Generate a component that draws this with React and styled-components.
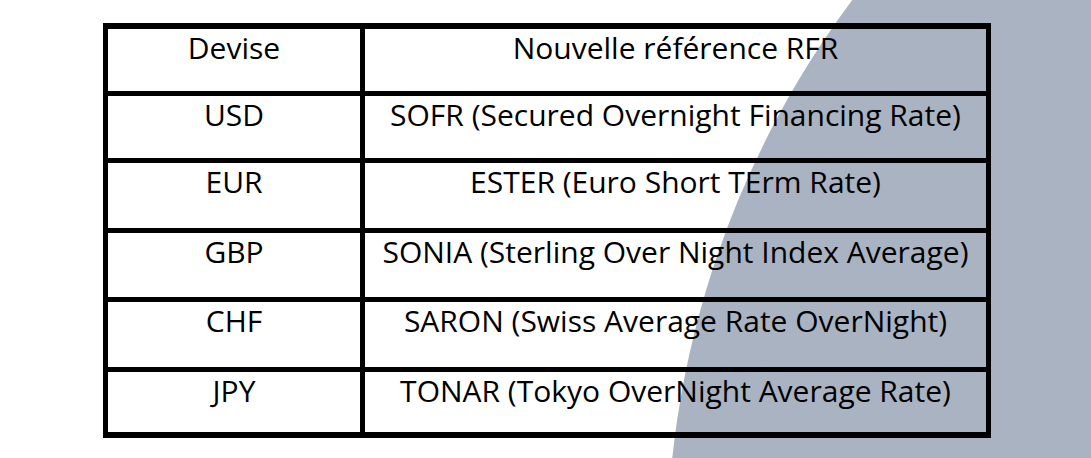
import styled, { createGlobalStyle } from 'styled-components';

const GlobalStyle = createGlobalStyle`
    html, body {
        margin: 0;
        padding: 0;
        background: #ffffff;
    }
`;

const rows = [
    { code: 'Devise', name: 'Nouvelle référence RFR', height: 67 },
    { code: 'USD', name: 'SOFR (Secured Overnight Financing Rate)', height: 67 },
    { code: 'EUR', name: 'ESTER (Euro Short TErm Rate)', height: 70 },
    { code: 'GBP', name: 'SONIA (Sterling Over Night Index Average)', height: 69 },
    { code: 'CHF', name: 'SARON (Swiss Average Rate OverNight)', height: 70 },
    { code: 'JPY', name: 'TONAR (Tokyo OverNight Average Rate)', height: 60 },
];

const Page = styled.div`
    position: relative;
    width: 1091px;
    height: 458px;
    overflow: hidden;
    padding: 23px 0 0 103px;
    box-sizing: border-box;
    font-family: "Open Sans", Lato, sans-serif;
    color: #000;
`;

// big slate disc peeking in from the right, behind the table
const Disc = styled.div`
    position: absolute;
    left: 667px;
    top: -373px;
    width: 1860px;
    height: 1860px;
    border-radius: 50%;
    background: #a9b3c2;
`;

const Table = styled.div`
    position: relative;
    display: grid;
    grid-template-columns: 257px 621px;
    grid-template-rows: ${p => p.heights.map(h => `${h}px`).join(' ')};
    width: max-content;
    border-style: solid;
    border-color: #000;
    border-width: 6px 5px 6px 5px;
`;

const Cell = styled.div`
    box-sizing: border-box;
    padding-top: 2px;
    text-align: center;
    font-size: 30px;
    line-height: 34px;
    white-space: nowrap;
    border-bottom: ${p => p.last ? 'none' : '5px solid #000'};
    border-right: ${p => p.first ? '5px solid #000' : 'none'};
`;

export default function App() {
    return (
        <>
            <GlobalStyle />
            <Page>
                <Disc />
                <Table heights={rows.map(r => r.height)}>
                    {rows.map((r, i) => (
                        <>
                            <Cell key={r.code} first last={i === rows.length - 1}>{r.code}</Cell>
                            <Cell key={r.code + '-n'} last={i === rows.length - 1}>{r.name}</Cell>
                        </>
                    ))}
                </Table>
            </Page>
        </>
    );
}
